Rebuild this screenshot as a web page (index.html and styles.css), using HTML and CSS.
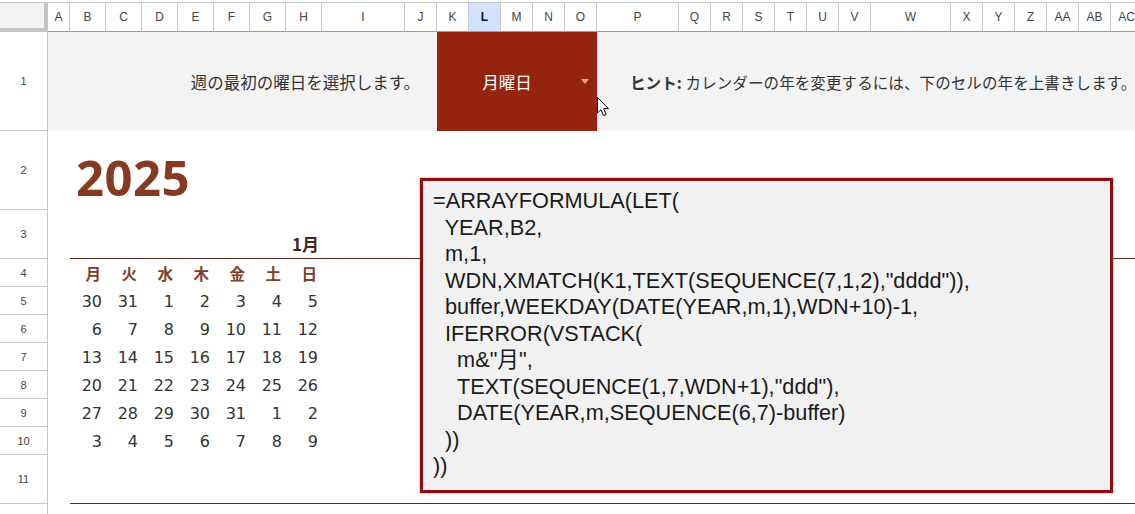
FILE: index.html
```html
<!DOCTYPE html>
<html lang="ja">
<head>
<meta charset="utf-8">
<title>カレンダー</title>
<link rel="stylesheet" href="styles.css">
</head>
<body>
<div class="topstrip"></div>
<div class="colhead">
  <div class="corner"></div>
  <div class="ch wA">A</div>
  <div class="ch wB">B</div>
  <div class="ch wB">C</div>
  <div class="ch wB">D</div>
  <div class="ch wB">E</div>
  <div class="ch wB">F</div>
  <div class="ch wB">G</div>
  <div class="ch wB">H</div>
  <div class="ch wI">I</div>
  <div class="ch wS">J</div>
  <div class="ch wS">K</div>
  <div class="ch wS active">L</div>
  <div class="ch wS">M</div>
  <div class="ch wS">N</div>
  <div class="ch wS">O</div>
  <div class="ch wP">P</div>
  <div class="ch wS">Q</div>
  <div class="ch wS">R</div>
  <div class="ch wS">S</div>
  <div class="ch wS">T</div>
  <div class="ch wS">U</div>
  <div class="ch wS">V</div>
  <div class="ch wW">W</div>
  <div class="ch wS">X</div>
  <div class="ch wS">Y</div>
  <div class="ch wS">Z</div>
  <div class="ch wS">AA</div>
  <div class="ch wS">AB</div>
  <div class="ch wS">AC</div>
</div>
<div class="main">
  <div class="rowhead">
    <div class="rh h1">1</div>
    <div class="rh h2">2</div>
    <div class="rh h3">3</div>
    <div class="rh h4">4</div>
    <div class="rh h4">5</div>
    <div class="rh h4">6</div>
    <div class="rh h4">7</div>
    <div class="rh h4">8</div>
    <div class="rh h4">9</div>
    <div class="rh h4">10</div>
    <div class="rh h3">11</div>
    <div class="rh hlast"></div>
  </div>
  <div class="content">
    <div class="r1">
      <div class="lead">週の最初の曜日を選択します。</div>
      <div class="dd"><span class="dd-label">月曜日</span><span class="dd-arrow"></span></div>
      <div class="hint"><b>ヒント:</b> カレンダーの年を変更するには、下のセルの年を上書きします。</div>
    </div>
    <div class="r2"><div class="year">2025</div></div>
    <div class="r3"><div class="month">1月</div></div>
    <div class="cal">
      <div class="wd">月</div><div class="wd">火</div><div class="wd">水</div><div class="wd">木</div><div class="wd">金</div><div class="wd">土</div><div class="wd">日</div>
      <div class="d">30</div><div class="d">31</div><div class="d">1</div><div class="d">2</div><div class="d">3</div><div class="d">4</div><div class="d">5</div>
      <div class="d">6</div><div class="d">7</div><div class="d">8</div><div class="d">9</div><div class="d">10</div><div class="d">11</div><div class="d">12</div>
      <div class="d">13</div><div class="d">14</div><div class="d">15</div><div class="d">16</div><div class="d">17</div><div class="d">18</div><div class="d">19</div>
      <div class="d">20</div><div class="d">21</div><div class="d">22</div><div class="d">23</div><div class="d">24</div><div class="d">25</div><div class="d">26</div>
      <div class="d">27</div><div class="d">28</div><div class="d">29</div><div class="d">30</div><div class="d">31</div><div class="d">1</div><div class="d">2</div>
      <div class="d">3</div><div class="d">4</div><div class="d">5</div><div class="d">6</div><div class="d">7</div><div class="d">8</div><div class="d">9</div>
    </div>
    <div class="r11"></div>
  </div>
</div>
<div class="formula">=ARRAYFORMULA(LET(
  YEAR,B2,
  m,1,
  WDN,XMATCH(K1,TEXT(SEQUENCE(7,1,2),"dddd")),
  buffer,WEEKDAY(DATE(YEAR,m,1),WDN+10)-1,
  IFERROR(VSTACK(
    m&amp;"月",
    TEXT(SEQUENCE(1,7,WDN+1),"ddd"),
    DATE(YEAR,m,SEQUENCE(6,7)-buffer)
  ))
))</div>
<svg class="cursor" width="14" height="22" viewBox="0 0 14 22">
  <path d="M1.5 1.5 L1.5 17 L5 13.6 L7.6 19.6 L10.2 18.5 L7.6 12.6 L12.4 12.6 Z" fill="#fff" stroke="#000" stroke-width="1" stroke-linejoin="round"/>
</svg>
</body>
</html>
```
FILE: styles.css
```css
* { box-sizing: border-box; }
html, body { margin: 0; padding: 0; background: #fff; }
body {
  width: 1135px;
  height: 514px;
  overflow: hidden;
  position: relative;
  font-family: "Liberation Sans", Arial, sans-serif;
}
.topstrip { height: 2px; background: #fff; }
.colhead {
  display: flex;
  height: 30px;
  border-top: 1px solid #c7c7c7;
  overflow: hidden;
}
.corner {
  flex: none;
  width: 48px;
  background: #f1f3f4;
  border-right: 4px solid #c4c4c4;
  border-bottom: 4px solid #c4c4c4;
}
.ch {
  flex: none;
  display: flex;
  align-items: center;
  justify-content: center;
  border-right: 1px solid #c7c7c7;
  border-bottom: 1px solid #7c9cd2;
  font-size: 12px;
  color: #444;
}
.ch.active { background: #d3e3fd; color: #0a1a33; font-weight: bold; }
.wA { width: 22px; }
.wB { width: 36px; }
.wI { width: 83px; }
.wS { width: 32px; }
.wP { width: 82px; }
.wW { width: 80px; }

.main { display: flex; height: 482px; overflow: hidden; }
.rowhead { flex: none; width: 48px; border-right: 1px solid #c7c7c7; }
.rh {
  display: flex;
  align-items: center;
  justify-content: center;
  border-bottom: 1px solid #c7c7c7;
  font-size: 11px;
  color: #444;
}
.h1 { height: 99px; }
.h2 { height: 79px; }
.h3 { height: 49px; }
.h4 { height: 28px; }
.hlast { height: 10px; border-bottom: none; }

.content { flex: 1; min-width: 0; }

.r1 {
  height: 99px;
  background: #f3f3f3;
  display: flex;
  align-items: center;
  font-family: "Noto Sans CJK JP", sans-serif;
  color: #333;
}
.lead { flex: none; width: 389px; text-align: right; padding-right: 17px; white-space: nowrap; font-size: 16.5px; }
.dd {
  flex: none;
  width: 160px;
  align-self: stretch;
  background: #95240e;
  color: #fff;
  display: flex;
  align-items: center;
}
.dd-label { flex: 1; text-align: center; font-size: 16.5px; }
.dd-arrow {
  width: 0;
  height: 0;
  margin: 0 8px 0 4px;
  border-left: 4px solid transparent;
  border-right: 4px solid transparent;
  border-top: 5px solid #eea08c;
}
.hint { padding-left: 33px; white-space: nowrap; font-size: 15.5px; letter-spacing: 0.1px; }
.hint b { font-weight: 700; }

.r2 { height: 79px; padding-left: 28px; padding-top: 22px; }
.year {
  font-family: "Noto Sans", "Liberation Sans", sans-serif;
  font-weight: 700;
  font-size: 49px;
  line-height: 49px;
  color: #873a22;
  letter-spacing: 0.5px;
}
.r3 {
  height: 49px;
  margin-left: 22px;
  border-bottom: 1px solid #5a2b1c;
  display: flex;
  align-items: flex-end;
}
.month {
  width: 252px;
  text-align: right;
  padding-right: 3px;
  padding-bottom: 2px;
  font-family: "Noto Sans CJK JP", sans-serif;
  font-weight: 700;
  font-size: 17px;
  color: #4a2416;
}
.cal {
  margin-left: 22px;
  display: grid;
  grid-template-columns: repeat(7, 36px);
  grid-auto-rows: 28px;
}
.wd, .d {
  display: flex;
  align-items: center;
  justify-content: flex-end;
}
.wd {
  padding-right: 5px;
  font-family: "Noto Sans CJK JP", sans-serif;
  font-weight: 700;
  font-size: 15.5px;
  color: #843c24;
}
.d {
  padding-right: 4px;
  font-family: "DejaVu Sans", sans-serif;
  font-size: 16px;
  color: #333;
}
.r11 { height: 49px; margin-left: 22px; border-bottom: 1px solid #5a2b1c; }

.formula {
  position: absolute;
  left: 420px;
  top: 178px;
  width: 693px;
  height: 315px;
  background: #f1f1f1;
  border: 3px solid #8a1010;
  box-shadow: 0 0 2px rgba(160, 20, 20, 0.6);
  padding: 7px 10px;
  white-space: pre;
  font-family: "Liberation Sans", "Noto Sans CJK JP", sans-serif;
  font-size: 21.7px;
  line-height: 26.5px;
  color: #1a1a1a;
}
.cursor { position: absolute; left: 596px; top: 96px; }
```
